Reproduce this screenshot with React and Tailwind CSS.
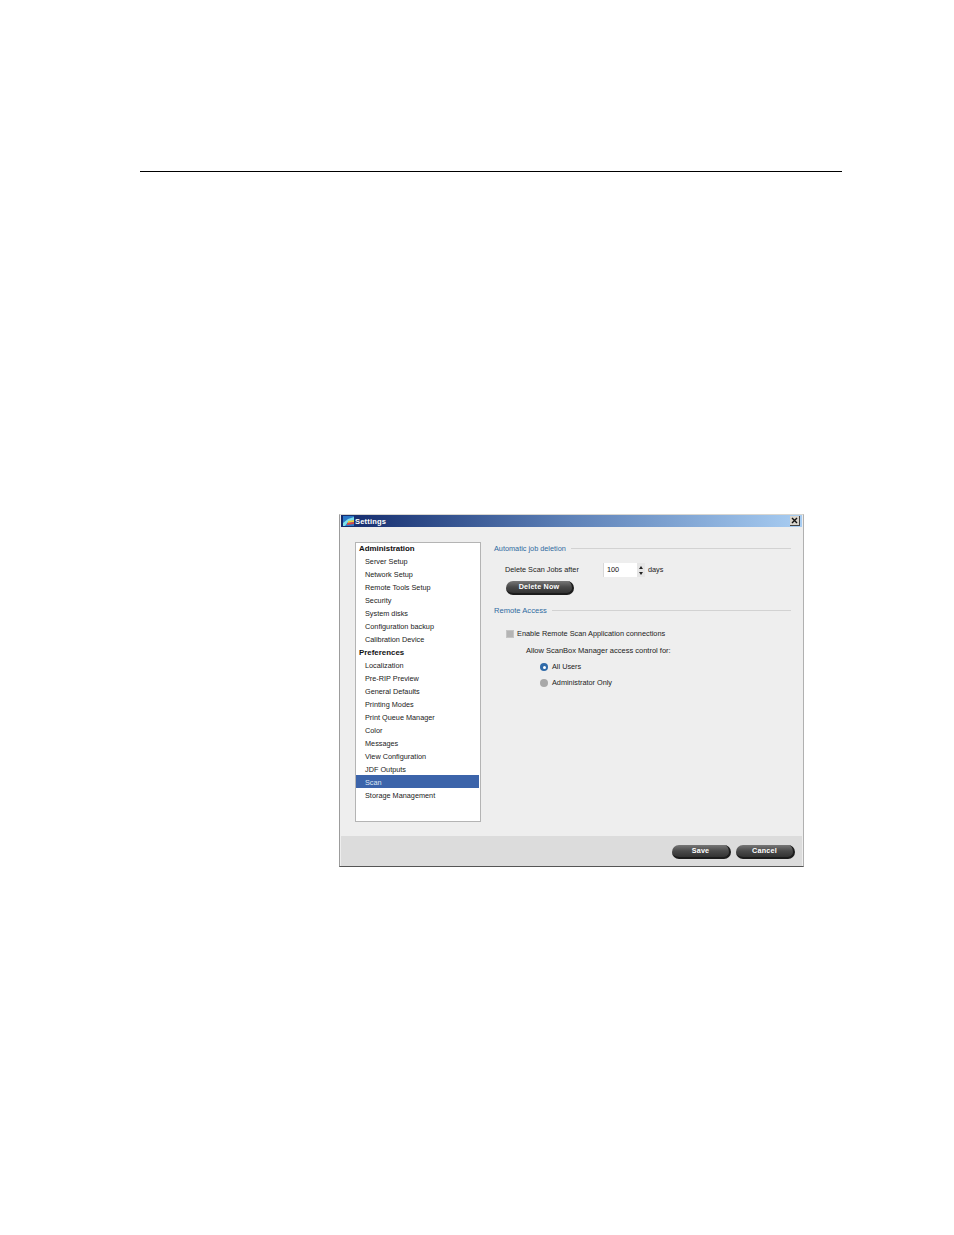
const adminItems = ['Server Setup', 'Network Setup', 'Remote Tools Setup', 'Security', 'System disks', 'Configuration backup', 'Calibration Device'];
const prefItems = ['Localization', 'Pre-RIP Preview', 'General Defaults', 'Printing Modes', 'Print Queue Manager', 'Color', 'Messages', 'View Configuration', 'JDF Outputs', 'Scan', 'Storage Management'];

function PillButton({ label, width }) {
  return (
    <button className={`${width} h-[14px] rounded-full bg-gradient-to-b from-[#777777] via-[#4a4a4a] to-[#333333] border-r-2 border-b-2 border-r-[#1c1c1c] border-b-[#1c1c1c] text-white text-[7.2px] font-bold leading-[12px] tracking-[0.2px] text-center`}>
      {label}
    </button>
  );
}

function NavRow({ label, heading, selected }) {
  if (heading) {
    return <div className="h-[13px] pl-[3px] leading-[16px] text-[7.9px] font-bold text-[#111111]">{label}</div>;
  }
  return (
    <div className={`h-[13px] pl-[9px] leading-[16px] ${selected ? 'bg-[#3c64aa] text-[#dfe6f2]' : 'text-[#222222]'}`}>
      {label}
    </div>
  );
}

function Legend({ label, large }) {
  return (
    <div className="flex items-center gap-[5px] h-[13px]">
      <span className={`leading-[13px] text-[#2f6a9f] whitespace-nowrap ${large ? 'text-[7.6px]' : ''}`}>{label}</span>
      <div className="flex-1 h-px bg-[#d2d2d2]" />
    </div>
  );
}

function Radio({ label, checked }) {
  return (
    <div className="flex items-center gap-[4px] h-[10px] pl-[14px]">
      <span className={`w-[8px] h-[8px] rounded-full flex items-center justify-center ${checked ? 'bg-[#2f6aa8]' : 'bg-[#a8a8a8]'}`}>
        {checked && <span className="w-[3px] h-[3px] rounded-full bg-white" />}
      </span>
      <span className="leading-[10px] text-[#222222]">{label}</span>
    </div>
  );
}

export default function App() {
  return (
    <div className="w-[954px] h-[1235px] bg-white pt-[171px] pl-[140px] text-[7.3px] font-['Liberation_Sans',Arial,sans-serif]">
      <div className="w-[702px] h-px bg-black" />

      <div className="ml-[199px] mt-[342px] w-[465px] h-[353px] flex flex-col bg-[#eeeeee] border-t border-t-[#d8d6d0] border-l border-l-[#9c9c9c] border-r border-r-[#b0b0b0] border-b border-b-[#555555] pl-px pr-px">
        {/* title bar */}
        <div className="h-[12px] shrink-0 flex items-center justify-between pl-[2px] pr-[2px] bg-gradient-to-r from-[#142a6c] via-[#5f82b8] to-[#a8cdf2]">
          <div className="flex items-center gap-[1px]">
            <svg width="11" height="10" viewBox="0 0 11 10">
              <rect width="11" height="10" fill="#2a78c8" />
              <path d="M0 7 L5 3 L11 1 L11 4 L5 6 L2 10 L0 10 Z" fill="#7fe0e8" />
              <path d="M5 5 L11 4 L11 6 L5 7 Z" fill="#e8d040" />
              <path d="M4 7 L11 6 L11 8 L4 9 Z" fill="#d84848" />
            </svg>
            <span className="text-[7.5px] font-bold text-white leading-[13px] tracking-[0.2px]">Settings</span>
          </div>
          <div className="w-[10px] h-[10px] bg-[#d8d4cc] border-r border-b border-r-[#444444] border-b-[#444444] flex items-center justify-center">
            <svg width="7" height="7" viewBox="0 0 7 7">
              <path d="M1 1 L6 6 M6 1 L1 6" stroke="#111111" strokeWidth="1.4" />
            </svg>
          </div>
        </div>

        {/* main area */}
        <div className="flex-1 flex pt-[15px] pl-[14px] pr-[11px]">
          <div className="w-[126px] h-[280px] shrink-0 bg-white border border-[#b4b4b4] pr-px">
            <div className="-mt-[2px]">
              <NavRow label="Administration" heading />
              {adminItems.map((item) => <NavRow key={item} label={item} />)}
              <NavRow label="Preferences" heading />
              {prefItems.map((item) => <NavRow key={item} label={item} selected={item === 'Scan'} />)}
            </div>
          </div>

          <div className="flex-1 pl-[13px]">
            <Legend label="Automatic job deletion" />
            <div className="flex items-center h-[14px] mt-[8px] pl-[11px] text-[#222222]">
              <span className="w-[98px] leading-[14px]">Delete Scan Jobs after</span>
              <div className="w-[34px] h-[14px] bg-white border-l border-l-[#d8d8d8] pl-[3px] leading-[13px] text-[#111111]">100</div>
              <div className="w-[8px] h-[14px] bg-[#e6e6e6] flex flex-col items-center justify-center gap-[3px]">
                <span className="w-0 h-0 border-x-[2px] border-x-transparent border-b-[3px] border-b-[#222222]" />
                <span className="w-0 h-0 border-x-[2px] border-x-transparent border-t-[3px] border-t-[#222222]" />
              </div>
              <span className="ml-[3px] leading-[14px]">days</span>
            </div>
            <div className="mt-[4px] pl-[12px] flex">
              <PillButton label="Delete Now" width="w-[68px]" />
            </div>
            <div className="mt-[9px]">
              <Legend label="Remote Access" large />
            </div>
            <div className="flex items-center h-[9px] mt-[12px] pl-[12px] gap-[3px]">
              <span className="w-[8px] h-[8px] bg-[#b4b4b4] border border-[#c4c4c4]" />
              <span className="leading-[9px] text-[7.35px] text-[#222222]">Enable Remote Scan Application connections</span>
            </div>
            <div className="mt-[8px] pl-[32px] h-[9px] leading-[9px] text-[7.5px] text-[#222222]">Allow ScanBox Manager access control for:</div>
            <div className="mt-[7px] pl-[32px] flex flex-col gap-[6px]">
              <Radio label="All Users" checked />
              <Radio label="Administrator Only" />
            </div>
          </div>
        </div>

        {/* footer */}
        <div className="h-[30px] shrink-0 bg-[#dcdcdc] flex items-start justify-end gap-[5px] pt-[9px] pr-[7px]">
          <PillButton label="Save" width="w-[59px]" />
          <PillButton label="Cancel" width="w-[59px]" />
        </div>
      </div>
    </div>
  );
}
